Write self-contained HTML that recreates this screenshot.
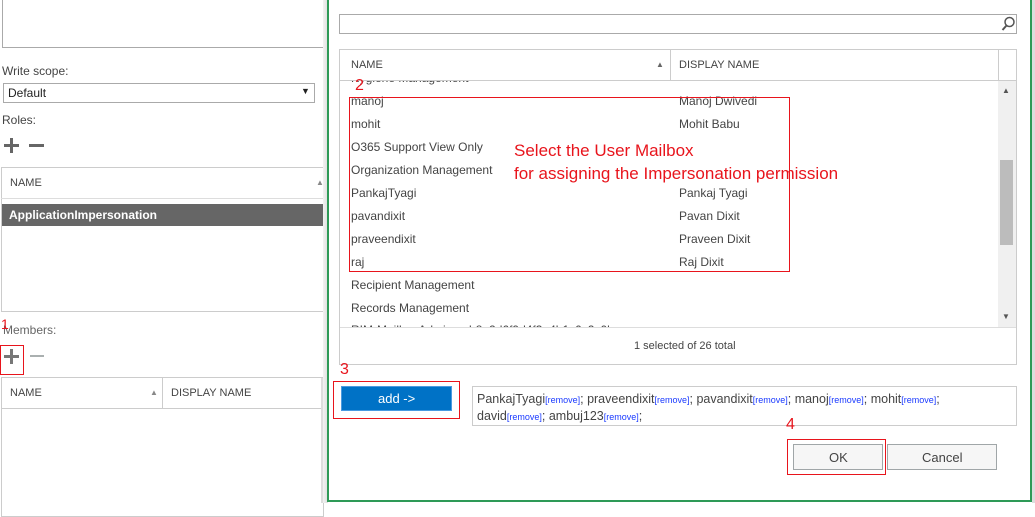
<!DOCTYPE html>
<html><head><style>
*{margin:0;padding:0;box-sizing:border-box}
body{width:1035px;height:503px;overflow:hidden;position:relative;background:#fff;font-family:"Liberation Sans",sans-serif;font-size:12px;color:#333}
.a{position:absolute}
.t{position:absolute;white-space:nowrap}
.red{color:#e8141c}
.rb{position:absolute;border:1px solid #e8141c}
.row{position:absolute;left:351px;font-size:12px;color:#444}
.row2{position:absolute;left:679px;font-size:12px;color:#444}
.rm{color:#1a3aff;font-size:9px}
</style></head><body>
<div class="a" style="left:2px;top:-2px;width:323px;height:50px;border:1px solid #aaa"></div>
<div class="t" style="left:2px;top:64px;color:#444">Write scope:</div>
<div class="a" style="left:3px;top:83px;width:312px;height:20px;border:1px solid #aaa"></div>
<div class="t" style="left:8px;top:86px;color:#222">Default</div>
<div class="t" style="left:301px;top:86px;font-size:9px;color:#222">▼</div>
<div class="t" style="left:2px;top:113px;color:#444">Roles:</div>
<div class="a" style="left:4px;top:144px;width:15px;height:3px;background:#666"></div>
<div class="a" style="left:10px;top:138px;width:3px;height:15px;background:#666"></div>
<div class="a" style="left:29px;top:144px;width:15px;height:3px;background:#666"></div>
<div class="a" style="left:1px;top:167px;width:328px;height:145px;border:1px solid #ccc;border-right:none"></div>
<div class="a" style="left:1px;top:198px;width:327px;height:1px;background:#ddd"></div>
<div class="t" style="left:10px;top:177px;font-size:11px;color:#444">NAME</div>
<div class="t" style="left:316px;top:178px;font-size:8px;color:#888">▲</div>
<div class="a" style="left:2px;top:204px;width:326px;height:22px;background:#666"></div>
<div class="t" style="left:9px;top:208px;color:#fff;font-weight:bold">ApplicationImpersonation</div>
<div class="t" style="left:3px;top:323px;color:#666">Members:</div>
<div class="t red" style="left:1px;top:316px;font-size:14px">1</div>
<div class="rb" style="left:0;top:345px;width:24px;height:30px"></div>
<div class="a" style="left:4px;top:355px;width:15px;height:3px;background:#777"></div>
<div class="a" style="left:10px;top:349px;width:3px;height:15px;background:#777"></div>
<div class="a" style="left:30px;top:355px;width:14px;height:2px;background:#aab0b0"></div>
<div class="a" style="left:1px;top:377px;width:323px;height:140px;border:1px solid #ccc"></div>
<div class="a" style="left:1px;top:408px;width:323px;height:1px;background:#ccc"></div>
<div class="a" style="left:162px;top:378px;width:1px;height:30px;background:#ccc"></div>
<div class="a" style="left:321px;top:378px;width:3px;height:125px;background:#ddd"></div>
<div class="t" style="left:10px;top:387px;font-size:11px;color:#444">NAME</div>
<div class="t" style="left:150px;top:388px;font-size:8px;color:#888">▲</div>
<div class="t" style="left:171px;top:387px;font-size:11px;color:#444">DISPLAY NAME</div>
<div class="a" style="left:323px;top:0;width:5px;height:503px;background:linear-gradient(to right,#f2f2f2,#ddd)"></div>
<div class="a" style="left:327px;top:-2px;width:705px;height:504px;border:2px solid #2e9a57;background:#fff"></div>
<div class="a" style="left:1032px;top:0;width:3px;height:503px;background:#ddd"></div>
<div class="a" style="left:339px;top:14px;width:678px;height:20px;border:1px solid #aaa"></div>
<svg class="a" style="left:1001px;top:16px" width="14" height="16" viewBox="0 0 14 16"><circle cx="8.5" cy="6" r="4.5" fill="none" stroke="#555" stroke-width="1.5"/><path d="M5.5 9.5 L1.5 14" stroke="#555" stroke-width="2"/></svg>
<div class="a" style="left:339px;top:49px;width:678px;height:316px;border:1px solid #ccc"></div>
<div class="a" style="left:340px;top:80px;width:676px;height:1px;background:#ccc"></div>
<div class="a" style="left:670px;top:50px;width:1px;height:30px;background:#ccc"></div>
<div class="a" style="left:998px;top:50px;width:1px;height:30px;background:#ccc"></div>
<div class="t" style="left:351px;top:59px;font-size:11px;color:#444">NAME</div>
<div class="t" style="left:656px;top:60px;font-size:8px;color:#666">▲</div>
<div class="t" style="left:679px;top:59px;font-size:11px;color:#444">DISPLAY NAME</div>
<div class="a" style="left:340px;top:81px;width:658px;height:246px;overflow:hidden">
<div class="t" style="left:11px;top:-10px;color:#444">Hygiene Management</div>
<div class="t" style="left:11px;top:242px;color:#444">RIM-MailboxAdmins-ab8e2d6f9d4f3e4b1c0c2c0b</div>
</div>
<div class="row" style="top:94px">manoj</div><div class="row2" style="top:94px">Manoj Dwivedi</div>
<div class="row" style="top:117px">mohit</div><div class="row2" style="top:117px">Mohit Babu</div>
<div class="row" style="top:140px">O365 Support View Only</div>
<div class="row" style="top:163px">Organization Management</div>
<div class="row" style="top:186px">PankajTyagi</div><div class="row2" style="top:186px">Pankaj Tyagi</div>
<div class="row" style="top:209px">pavandixit</div><div class="row2" style="top:209px">Pavan Dixit</div>
<div class="row" style="top:232px">praveendixit</div><div class="row2" style="top:232px">Praveen Dixit</div>
<div class="row" style="top:255px">raj</div><div class="row2" style="top:255px">Raj Dixit</div>
<div class="row" style="top:278px">Recipient Management</div>
<div class="row" style="top:301px">Records Management</div>
<div class="a" style="left:998px;top:81px;width:18px;height:246px;background:#f0f0f0"></div>
<div class="a" style="left:1000px;top:160px;width:13px;height:85px;background:#bcbcbc"></div>
<div class="t" style="left:1002px;top:86px;font-size:8px;color:#555">▲</div>
<div class="t" style="left:1002px;top:312px;font-size:8px;color:#555">▼</div>
<div class="a" style="left:340px;top:327px;width:676px;height:1px;background:#ddd"></div>
<div class="t" style="left:634px;top:340px;font-size:11px;color:#444">1 selected of 26 total</div>
<div class="t red" style="left:355px;top:77px;font-size:16px">2</div>
<div class="rb" style="left:349px;top:97px;width:441px;height:175px"></div>
<div class="t red" style="left:514px;top:139px;font-size:17px;line-height:23px">Select the User Mailbox<br>for assigning the Impersonation permission</div>
<div class="t red" style="left:340px;top:361px;font-size:16px">3</div>
<div class="rb" style="left:333px;top:381px;width:127px;height:38px"></div>
<div class="a" style="left:341px;top:386px;width:111px;height:25px;background:#0072c6;border:1px solid #4a9ae0"></div>
<div class="t" style="left:378px;top:391px;color:#fff;font-size:13px">add -&gt;</div>
<div class="a" style="left:472px;top:386px;width:545px;height:40px;border:1px solid #ccc"></div>
<div class="t" style="left:477px;top:391px;color:#444;line-height:16px;font-size:12.5px">PankajTyagi<span class="rm">[remove]</span>; praveendixit<span class="rm">[remove]</span>; pavandixit<span class="rm">[remove]</span>; manoj<span class="rm">[remove]</span>; mohit<span class="rm">[remove]</span>;<br>david<span class="rm">[remove]</span>; ambuj123<span class="rm">[remove]</span>;</div>
<div class="t red" style="left:786px;top:416px;font-size:16px">4</div>
<div class="rb" style="left:787px;top:439px;width:99px;height:36px"></div>
<div class="a" style="left:793px;top:444px;width:90px;height:26px;background:#f6f6f6;border:1px solid #a0a6a8"></div>
<div class="t" style="left:829px;top:450px;color:#444;font-size:13px">OK</div>
<div class="a" style="left:887px;top:444px;width:110px;height:26px;background:#f6f6f6;border:1px solid #a0a6a8"></div>
<div class="t" style="left:922px;top:450px;color:#444;font-size:13px">Cancel</div>
</body></html>
